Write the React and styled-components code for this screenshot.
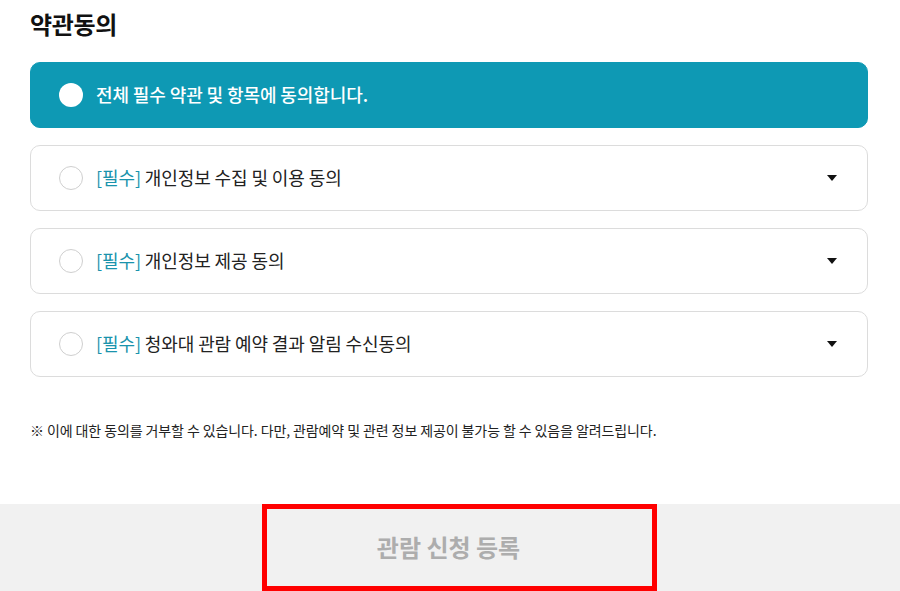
import React, { useState } from 'react';
import styled, { createGlobalStyle } from 'styled-components';

const GlobalStyle = createGlobalStyle`
  body {
    margin: 0;
    background: #fff;
    font-family: "Noto Sans CJK KR", "Noto Sans", sans-serif;
    color: #222;
  }
`;

const Page = styled.div`
  padding: 7px 32px 0 30px;
`;

const Title = styled.h2`
  margin: 0;
  font-size: 24px;
  line-height: 34px;
  font-weight: 700;
  color: #111;
  letter-spacing: -0.3px;
`;

const List = styled.div`
  display: flex;
  flex-direction: column;
  gap: 17px;
  margin-top: 21px;
`;

const Card = styled.div`
  display: flex;
  align-items: center;
  height: 66px;
  box-sizing: border-box;
  padding: 0 30px 0 28px;
  border-radius: 10px;
  border: 1px solid ${(p) => (p.$all ? '#0e99b4' : '#dcdcdc')};
  background: ${(p) => (p.$all ? '#0e99b4' : '#fff')};
  cursor: pointer;
`;

const Check = styled.span`
  width: 24px;
  height: 24px;
  box-sizing: border-box;
  border-radius: 50%;
  flex-shrink: 0;
  background: #fff;
  border: ${(p) => (p.$filled ? 'none' : '1px solid #cfcfcf')};
`;

const Label = styled.span`
  flex: 1;
  margin-left: 13px;
  padding-bottom: 3px;
  font-size: 18px;
  line-height: 24px;
  font-weight: ${(p) => (p.$all ? 500 : 400)};
  color: ${(p) => (p.$all ? '#fff' : '#222')};
  letter-spacing: -0.1px;
`;

const Required = styled.span`
  color: #1a93ac;
`;

const Caret = styled.span`
  width: 0;
  height: 0;
  border-left: 5.5px solid transparent;
  border-right: 5.5px solid transparent;
  border-top: 6px solid #111;
`;

const Note = styled.p`
  margin: 43px 0 0;
  font-size: 14px;
  line-height: 20px;
  color: #222;
  letter-spacing: -0.1px;
`;

const Footer = styled.div`
  display: flex;
  justify-content: center;
  margin-top: 64px;
  background: #f1f1f1;
`;

const Submit = styled.button`
  width: 395px;
  height: 87px;
  margin-left: 18px;
  padding: 0 21px 3px 0;
  box-sizing: border-box;
  border: 5px solid #ff0000;
  background: #f1f1f1;
  color: #adadad;
  font-family: inherit;
  font-size: 24px;
  font-weight: 700;
  cursor: default;
`;

const terms = [
  '개인정보 수집 및 이용 동의',
  '개인정보 제공 동의',
  '청와대 관람 예약 결과 알림 수신동의',
];

export default function App() {
  const [checked] = useState([false, false, false]);

  return (
    <>
      <GlobalStyle />
      <Page>
        <Title>약관동의</Title>
        <List>
          <Card $all>
            <Check $filled />
            <Label $all>전체 필수 약관 및 항목에 동의합니다.</Label>
          </Card>
          {terms.map((t, i) => (
            <Card key={t}>
              <Check $filled={checked[i]} />
              <Label>
                <Required>[필수]</Required> {t}
              </Label>
              <Caret />
            </Card>
          ))}
        </List>
        <Note>
          ※ 이에 대한 동의를 거부할 수 있습니다. 다만, 관람예약 및 관련 정보 제공이 불가능 할 수 있음을 알려드립니다.
        </Note>
      </Page>
      <Footer>
        <Submit disabled>관람 신청 등록</Submit>
      </Footer>
    </>
  );
}
